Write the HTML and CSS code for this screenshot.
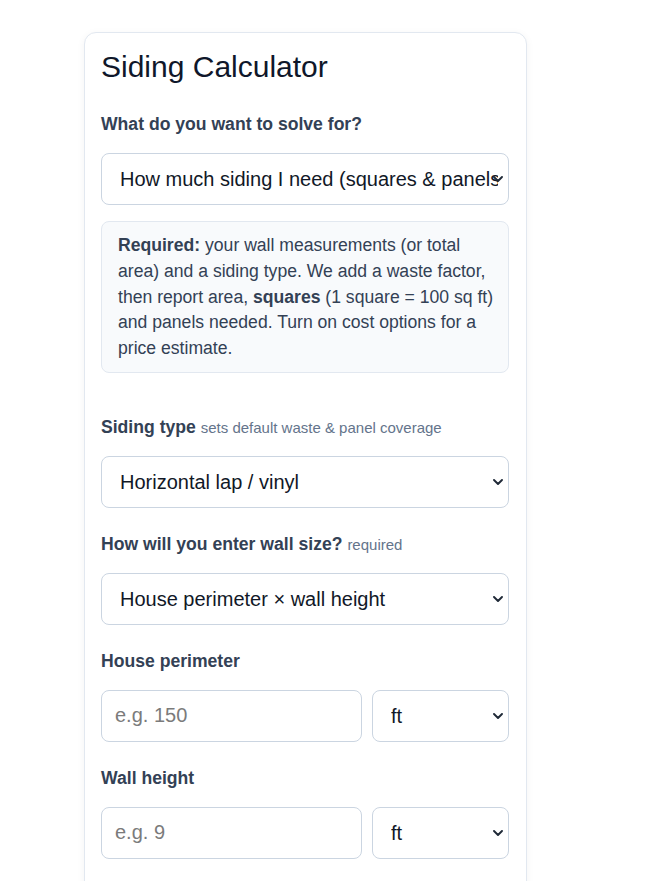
FILE: index.html
```html
<!DOCTYPE html>
<html lang="en">
<head>
<meta charset="utf-8">
<title>Siding Calculator</title>
<link rel="stylesheet" href="styles.css">
</head>
<body>
<div class="page">
  <div class="card">
    <h1 class="title">Siding Calculator</h1>

    <div class="field">
      <label class="label" for="solve">What do you want to solve for?</label>
      <div class="select-wrap">
        <select id="solve" class="control select">
          <option>How much siding I need (squares &amp; panels)</option>
        </select>
        <svg class="chev" viewBox="0 0 10 6" width="10" height="6" aria-hidden="true"><path d="M1 1l4 4 4-4" fill="none" stroke="#1f2937" stroke-width="1.9" stroke-linecap="round" stroke-linejoin="round"/></svg>
      </div>
      <div class="info">
        <strong>Required:</strong> your wall measurements (or total area) and a siding type. We add a waste factor, then report area, <strong>squares</strong> (1 square = 100 sq ft) and panels needed. Turn on cost options for a price estimate.
      </div>
    </div>

    <div class="field field-spaced">
      <label class="label" for="type">Siding type <span class="hint">sets default waste &amp; panel coverage</span></label>
      <div class="select-wrap">
        <select id="type" class="control select">
          <option>Horizontal lap / vinyl</option>
        </select>
        <svg class="chev" viewBox="0 0 10 6" width="10" height="6" aria-hidden="true"><path d="M1 1l4 4 4-4" fill="none" stroke="#1f2937" stroke-width="1.9" stroke-linecap="round" stroke-linejoin="round"/></svg>
      </div>
    </div>

    <div class="field">
      <label class="label" for="mode">How will you enter wall size? <span class="hint">required</span></label>
      <div class="select-wrap">
        <select id="mode" class="control select">
          <option>House perimeter × wall height</option>
        </select>
        <svg class="chev" viewBox="0 0 10 6" width="10" height="6" aria-hidden="true"><path d="M1 1l4 4 4-4" fill="none" stroke="#1f2937" stroke-width="1.9" stroke-linecap="round" stroke-linejoin="round"/></svg>
      </div>
    </div>

    <div class="field">
      <label class="label" for="perim">House perimeter</label>
      <div class="row">
        <input id="perim" class="control input" type="text" placeholder="e.g. 150">
        <div class="select-wrap unit">
          <select class="control select"><option>ft</option></select>
          <svg class="chev" viewBox="0 0 10 6" width="10" height="6" aria-hidden="true"><path d="M1 1l4 4 4-4" fill="none" stroke="#1f2937" stroke-width="1.9" stroke-linecap="round" stroke-linejoin="round"/></svg>
        </div>
      </div>
    </div>

    <div class="field">
      <label class="label" for="height">Wall height</label>
      <div class="row">
        <input id="height" class="control input" type="text" placeholder="e.g. 9">
        <div class="select-wrap unit">
          <select class="control select"><option>ft</option></select>
          <svg class="chev" viewBox="0 0 10 6" width="10" height="6" aria-hidden="true"><path d="M1 1l4 4 4-4" fill="none" stroke="#1f2937" stroke-width="1.9" stroke-linecap="round" stroke-linejoin="round"/></svg>
        </div>
      </div>
    </div>
  </div>
</div>
</body>
</html>
```

FILE: styles.css
```css
* { box-sizing: border-box; }
html, body { margin: 0; padding: 0; background: #ffffff; }
body {
  font-family: "Liberation Sans", Arial, sans-serif;
  color: #334155;
}
.page {
  padding: 32px 0 0 84px;
}
.card {
  width: 443px;
  border: 1px solid #e2e8f0;
  border-radius: 12px;
  background: #ffffff;
  padding: 16px 17px 24px 16px;
  box-shadow: 0 2px 8px rgba(15, 23, 42, 0.05);
}
.title {
  margin: 0 0 27px;
  font-size: 30px;
  font-weight: 400;
  line-height: 36px;
  color: #0f172a;
}
.field {
  display: flex;
  flex-direction: column;
  margin-bottom: 24px;
}
.field-spaced { margin-top: 42px; }
.label {
  display: block;
  font-size: 17.6px;
  font-weight: 700;
  line-height: 24px;
  margin-bottom: 17px;
  color: #334155;
}
.hint {
  font-size: 15px;
  font-weight: 400;
  line-height: 1;
  color: #64748b;
}
.control {
  display: block;
  height: 52px;
  width: 100%;
  font-family: "Liberation Sans", Arial, sans-serif;
  font-size: 20px;
  color: #111827;
  background: #ffffff;
  border: 1px solid #cbd5e1;
  border-radius: 8px;
  padding: 0 13px;
  margin: 0;
  outline: none;
}
.select {
  -webkit-appearance: none;
  appearance: none;
  padding: 0 10px 0 18px;
}
.select-wrap {
  position: relative;
}
.chev {
  position: absolute;
  right: 6px;
  top: 50%;
  margin-top: -3px;
  pointer-events: none;
}
.input::placeholder { color: #7b7b7b; opacity: 1; }
.info {
  margin-top: 16px;
  background: #f8fafc;
  border: 1px solid #e2e8f0;
  border-radius: 8px;
  padding: 11px 12px 10px 16px;
  font-size: 17.6px;
  line-height: 25.75px;
  color: #334155;
}
.info strong { font-weight: 700; }
.row {
  display: flex;
  gap: 10px;
}
.row .input { flex: 1; min-width: 0; }
.row .unit { width: 137px; flex: none; }
```
